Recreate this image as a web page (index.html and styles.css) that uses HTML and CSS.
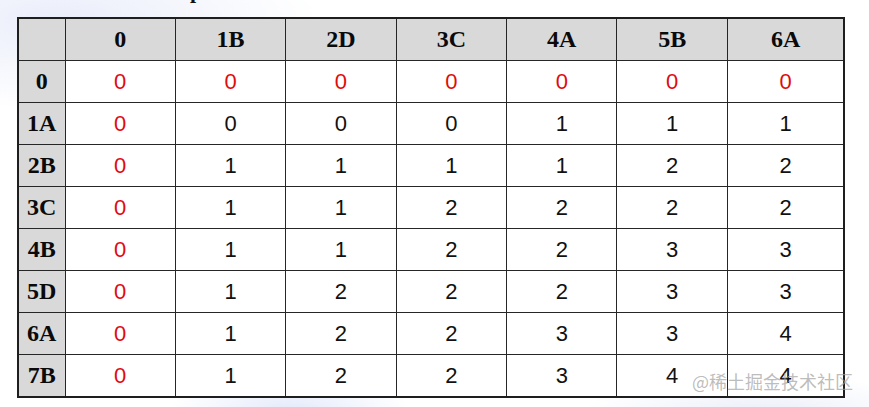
FILE: index.html
```html
<!DOCTYPE html>
<html lang="zh">
<head>
<meta charset="utf-8">
<title>LCS table</title>
<link rel="stylesheet" href="styles.css">
</head>
<body>
<div class="page">
  <div class="cut-title">p</div>
  <table class="lcs">
    <colgroup>
      <col class="c-head"><col class="c-n"><col class="c-n"><col class="c-n"><col class="c-n"><col class="c-n"><col class="c-n"><col class="c-last">
    </colgroup>
    <thead>
      <tr><th></th><th>0</th><th>1B</th><th>2D</th><th>3C</th><th>4A</th><th>5B</th><th>6A</th></tr>
    </thead>
    <tbody>
      <tr><th>0</th><td class="z">0</td><td class="z">0</td><td class="z">0</td><td class="z">0</td><td class="z">0</td><td class="z">0</td><td class="z">0</td></tr>
      <tr><th>1A</th><td class="z">0</td><td>0</td><td>0</td><td>0</td><td>1</td><td>1</td><td>1</td></tr>
      <tr><th>2B</th><td class="z">0</td><td>1</td><td>1</td><td>1</td><td>1</td><td>2</td><td>2</td></tr>
      <tr><th>3C</th><td class="z">0</td><td>1</td><td>1</td><td>2</td><td>2</td><td>2</td><td>2</td></tr>
      <tr><th>4B</th><td class="z">0</td><td>1</td><td>1</td><td>2</td><td>2</td><td>3</td><td>3</td></tr>
      <tr><th>5D</th><td class="z">0</td><td>1</td><td>2</td><td>2</td><td>2</td><td>3</td><td>3</td></tr>
      <tr><th>6A</th><td class="z">0</td><td>1</td><td>2</td><td>2</td><td>3</td><td>3</td><td>4</td></tr>
      <tr><th>7B</th><td class="z">0</td><td>1</td><td>2</td><td>2</td><td>3</td><td>4</td><td>4</td></tr>
    </tbody>
  </table>
  <div class="watermark">@稀土掘金技术社区</div>
</div>
</body>
</html>
```

FILE: styles.css
```css
html, body {
  margin: 0;
  padding: 0;
}
body {
  width: 869px;
  height: 407px;
  overflow: hidden;
  background:
    radial-gradient(ellipse 260px 90px at 60px 20px, rgba(232,236,250,0.9), rgba(255,255,255,0) 100%),
    radial-gradient(ellipse 120px 40px at 290px 410px, rgba(225,232,250,0.9), rgba(255,255,255,0) 100%),
    radial-gradient(ellipse 180px 40px at 760px 415px, rgba(232,236,248,0.9), rgba(255,255,255,0) 100%),
    #ffffff;
}
.page {
  position: relative;
  width: 869px;
  height: 407px;
  padding: 17px 0 0 17px;
  box-sizing: border-box;
}
.cut-title {
  position: absolute;
  left: 190px;
  top: -22px;
  font-family: "Liberation Serif", serif;
  font-weight: bold;
  font-size: 22px;
  color: #111;
}
.lcs {
  border-collapse: collapse;
  table-layout: fixed;
  width: 827px;
  border: 2px solid #1e1e1e;
}
.c-head { width: 47px; }
.c-n { width: 110.4px; }
.c-last { width: 117px; }
.lcs th, .lcs td {
  border: 1.5px solid #262626;
  height: 41px;
  padding: 0;
  text-align: center;
  vertical-align: middle;
}
.lcs th {
  background: #d9d9d9;
  font-family: "Liberation Serif", "Times New Roman", serif;
  font-weight: bold;
  font-size: 24px;
  color: #0a0a0a;
}
.lcs td {
  background: #ffffff;
  font-family: "Liberation Sans", Arial, sans-serif;
  font-size: 22px;
  color: #111;
}
.lcs td.z {
  color: #e00c0c;
}
.watermark {
  position: absolute;
  left: 692px;
  top: 368px;
  font-family: "Noto Sans CJK SC", sans-serif;
  font-size: 18px;
  color: rgba(160,160,160,0.7);
  white-space: nowrap;
}
```
